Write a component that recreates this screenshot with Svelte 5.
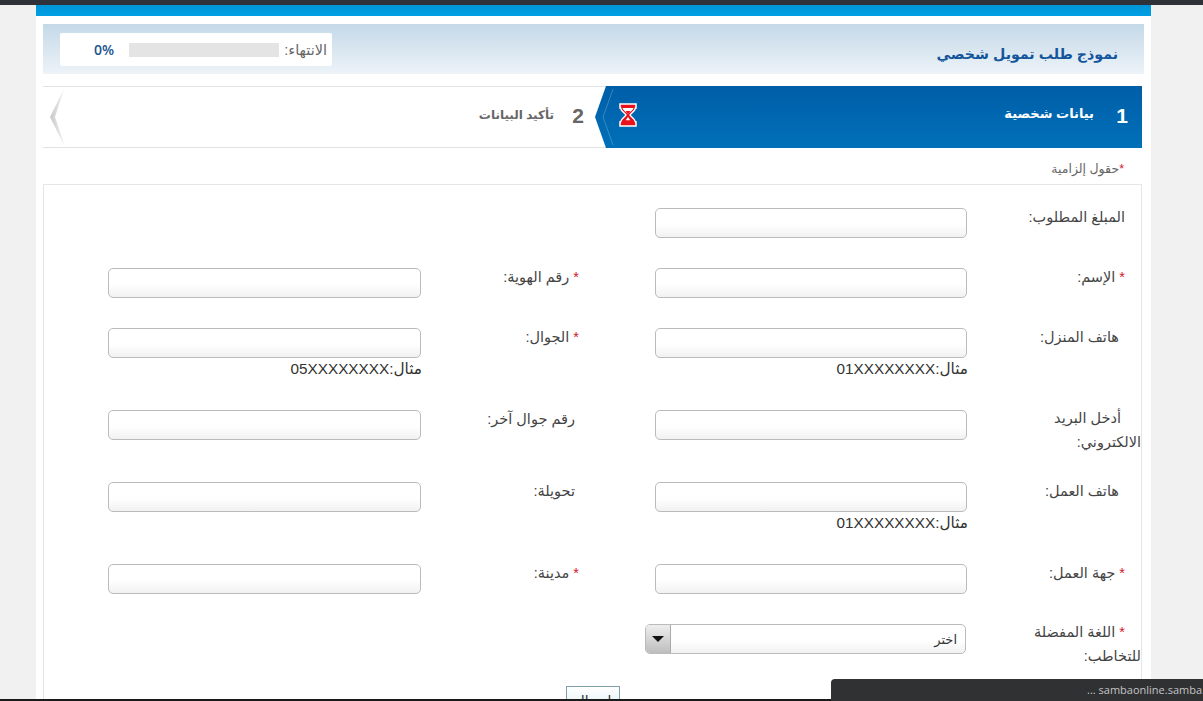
<script>
  const rows = [
    { a: { label: 'المبلغ المطلوب:' } },
    { a: { label: 'الإسم:', req: true }, b: { label: 'رقم الهوية:', req: true } },
    {
      a: { label: 'هاتف المنزل:', sp: true, hint: '01XXXXXXXX' },
      b: { label: 'الجوال:', req: true, hint: '05XXXXXXXX' }
    },
    { a: { label: 'أدخل البريد الالكتروني:', sp: true, tall: true }, b: { label: 'رقم جوال آخر:', sp: true } },
    { a: { label: 'هاتف العمل:', sp: true, hint: '01XXXXXXXX' }, b: { label: 'تحويلة:', sp: true } },
    { a: { label: 'جهة العمل:', req: true }, b: { label: 'مدينة:', req: true } }
  ];
</script>

<div class="page" dir="rtl">
  <div class="strip"></div>

  <header class="head">
    <h1>نموذج طلب تمويل شخصي</h1>
    <div class="progress">
      <span class="progress-label">الانتهاء:</span>
      <span class="bar"></span>
      <span class="pct" dir="ltr">0%</span>
    </div>
  </header>

  <nav class="steps">
    <div class="step active">
      <b class="num">1</b>
      <span class="name">بيانات شخصية</span>
      <svg class="fold" width="20" height="62" viewBox="0 0 20 62">
        <path d="M18 3 8 31l10 28" fill="none" stroke="#fff" stroke-opacity=".22" />
      </svg>
      <svg class="glass" width="18" height="24" viewBox="0 0 18 24">
        <path d="M1 1h16v4h-.5c-.5 3.500-4.500 5-5.500 7 1 2 5 3.500 5.500 7h.5v4H1v-4h.5c.5-3.500 4.500-5 5.500-7-1-2-5-3.500-5.500-7H1z" fill="#e8111c" stroke="#fff" stroke-width="1.500" />
        <path d="M3.500 5h11c-.5 2.500-4 4-5.500 6-1.500-2-5-3.500-5.500-6z" fill="#fff" />
        <path d="M6.500 8h5L9 11z" fill="#e8111c" />
        <path d="M9 14c.7 1.200 1.600 2 2.200 3.200H6.800C7.400 16 8.300 15.200 9 14z" fill="#fff" />
      </svg>
    </div>
    <div class="step next">
      <b class="num">2</b>
      <span class="name">تأكيد البيانات</span>
    </div>
    <svg class="end" width="16" height="60" viewBox="0 0 16 60">
      <defs>
        <linearGradient id="endfade" x1="0" x2="1" y1="0" y2="0">
          <stop offset="0" stop-color="#c8c8c8" />
          <stop offset="1" stop-color="#f4f4f4" />
        </linearGradient>
      </defs>
      <path d="M14 2 0 30l15 30L5 30z" fill="url(#endfade)" />
    </svg>
  </nav>

  <div class="required"><span class="star">*</span>حقول إلزامية</div>

  <form class="box">
    {#each rows as row}
      <div class="row">
        <div class="cell first">
          <label class="lbl" class:tall={row.a.tall} class:sp={row.a.sp}>{#if row.a.req}<span class="star">*</span>&nbsp;{/if}{#if row.a.sp}&nbsp;{/if}{row.a.label}</label>
          <div class="field">
            <input type="text" />
            {#if row.a.hint}<div class="hint">مثال:{row.a.hint}</div>{/if}
          </div>
        </div>
        {#if row.b}
          <div class="cell second">
            <label class="lbl">{#if row.b.req}<span class="star">*</span>&nbsp;{/if}{#if row.b.sp}&nbsp;{/if}{row.b.label}</label>
            <div class="field">
              <input type="text" />
              {#if row.b.hint}<div class="hint">مثال:{row.b.hint}</div>{/if}
            </div>
          </div>
        {/if}
      </div>
    {/each}

    <div class="row last">
      <div class="cell first">
        <label class="lbl tall"><span class="star">*</span>&nbsp;اللغة المفضلة للتخاطب:</label>
        <div class="select">
          <span class="sel-text">اختر</span>
          <span class="sel-btn"><i></i></span>
        </div>
      </div>
    </div>

    <div class="actions"><button type="button">إرسال</button></div>
  </form>
</div>

<div class="bottom-line"></div>
<div class="toast" dir="ltr">... sambaonline.samba.com</div>

<style>
  :global(body) {
    margin: 0;
    height: 701px;
    overflow: hidden;
    background: #f1f1f1;
    font-family: "Liberation Sans", "DejaVu Sans", sans-serif;
    border-top: 5px solid #2f3238;
    box-sizing: border-box;
  }
  .page {
    width: 1115px;
    margin-left: 36px;
    height: 696px;
    background: #fff;
    overflow: hidden;
  }
  .strip { height: 11px; background: linear-gradient(#0095d8, #009fe3); }
  .head {
    margin: 8px 7px 0 7px;
    height: 50px;
    background: linear-gradient(#c4d9e8, #edf3f8);
    display: flex;
    align-items: center;
    justify-content: space-between;
  }
  h1 {
    margin: 10px 26px 0 0;
    font-size: 14.200px;
    color: #14569c;
    font-weight: bold;
  }
  .progress {
    width: 272px;
    height: 33px;
    margin: 1px 0 0 17px;
    background: #fff;
    border-radius: 2px;
    display: flex;
    align-items: center;
    font-size: 14.500px;
    color: #666;
  }
  .progress-label { width: 48px; margin-right: 5px; white-space: nowrap; }
  .bar { width: 150px; height: 14px; background: #e4e4e4; }
  .pct { margin-right: 15px; font: 600 14px "Open Sans", sans-serif; color: #1c5490; }
  .steps {
    position: relative;
    margin: 12px 9px 0 7px;
    height: 60px;
    border-top: 1px solid #e2e2e2;
    border-bottom: 1px solid #e2e2e2;
    display: flex;
  }
  .step { display: flex; align-items: center; height: 60px; }
  .step.active {
    width: 547px;
    margin-top: -1px;
    height: 62px;
    box-sizing: border-box;
    background: linear-gradient(#005ea8, #0070b8);
    clip-path: polygon(11px 0, 100% 0, 100% 100%, 11px 100%, 0 50%);
    color: #fff;
    position: relative;
  }
  .num { font-size: 21px; width: 22px; text-align: center; margin: -3px 9px 0 0; line-height: 1; }
  .name { font-size: 13px; font-weight: bold; margin-right: 17px; margin-top: -7px; }
  .fold { position: absolute; left: 0; top: 0; }
  .glass { position: absolute; left: 24px; top: 17px; }
  .step.next { color: #666; }
  .step.next .num { margin-right: 6px; }
  .step.next .name { font-size: 12px; margin-right: 13px; margin-top: -5px; }
  .end { position: absolute; left: 7px; top: 0; }
  .required {
    margin: 10px 27px 0 0;
    height: 26px;
    font-size: 12.500px;
    color: #666;
    line-height: 22px;
  }
  .star { color: #d2142c; }
  .box {
    margin: 0 9px 0 7px;
    padding: 23px 0 0 0;
    border: 1px solid #e6e6e6;
    border-bottom: none;
    height: 600px;
  }
  .row { display: flex; margin-bottom: 30px; }
  .row.last { margin-bottom: 20px; }
  .cell { display: flex; flex: none; }
  .first { width: 561px; }
  .second { margin-right: 1px; }
  .lbl {
    display: block;
    flex: none;
    width: 118px;
    margin: -3px 0 0 56px;
    font-size: 14.500px;
    line-height: 24px;
    color: #444;
    text-indent: 16px;
  }
  .lbl.sp { text-indent: 18px; }
  .lbl.tall { margin-top: -4px; margin-bottom: -2px; text-indent: 16px; }
  .second .lbl {
    width: 150px;
    margin-left: 8px;
    text-indent: 0;
  }
  .field { flex: none; width: 312px; min-height: 30px; }
  .second .field { width: 313px; }
  input {
    display: block;
    width: 100%;
    height: 30px;
    box-sizing: border-box;
    border: 1px solid #bbb;
    border-radius: 5px;
    background: linear-gradient(#fff 55%, #f1f1f1);
    margin: 0;
  }
  .hint {
    height: 22px;
    margin-right: -1px;
    font-size: 15.300px;
    line-height: 21px;
    color: #333;
    text-align: right;
    white-space: nowrap;
  }
  .select {
    flex: none;
    width: 321px;
    height: 30px;
    margin-right: 1px;
    box-sizing: border-box;
    border: 1px solid #bbb;
    border-radius: 5px;
    display: flex;
    align-items: center;
    justify-content: space-between;
    background: linear-gradient(#fff 55%, #f1f1f1);
    font-size: 13px;
    color: #333;
    overflow: hidden;
  }
  .sel-text { margin-right: 8px; }
  .sel-btn {
    width: 25px;
    height: 100%;
    box-sizing: border-box;
    background: linear-gradient(#eee, #bdbdbd);
    border-right: 1px solid #aaa;
    display: flex;
    align-items: center;
    justify-content: center;
  }
  .sel-btn i {
    width: 0;
    height: 0;
    border: 6px solid transparent;
    border-top: 6px solid #111;
    border-bottom: none;
  }
  .actions { margin: 0 521px 0 0; }
  button {
    width: 54px;
    height: 30px;
    display: block;
    border: 1px solid #7f9fae;
    background: linear-gradient(#fff, #dcecf5);
    font: 14px "Liberation Sans", "DejaVu Sans", sans-serif;
    color: #333;
    padding: 0;
  }
  .bottom-line {
    position: fixed;
    left: 0;
    right: 0;
    bottom: 0;
    height: 2px;
    background: #1a1a1a;
  }
  .toast {
    position: fixed;
    left: 831px;
    top: 679px;
    width: 372px;
    height: 22px;
    background: #2f3133;
    border-top-left-radius: 4px;
    color: #c4c4c4;
    font: 11px/22px "Open Sans", sans-serif;
    white-space: nowrap;
    overflow: hidden;
    padding-left: 256px;
    box-sizing: border-box;
  }
</style>
